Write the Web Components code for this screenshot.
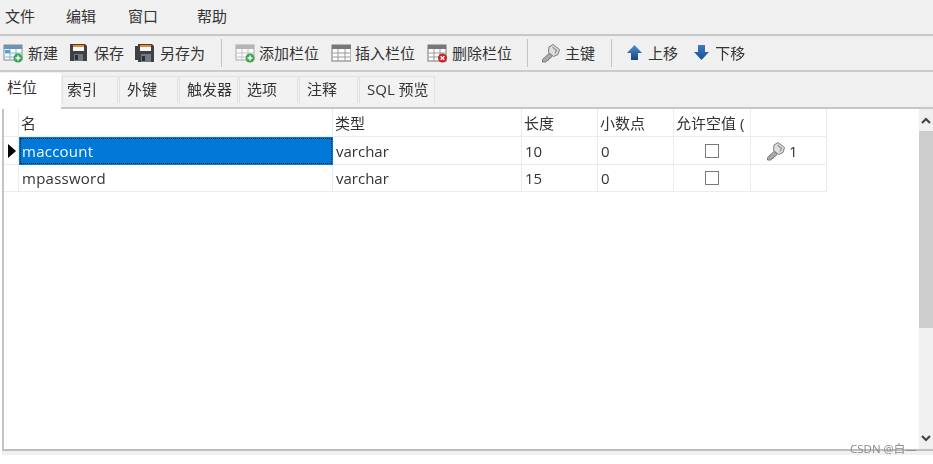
<!DOCTYPE html>
<html>
<head>
<meta charset="utf-8">
<style>
  html, body { margin: 0; padding: 0; background: #fff; }
  body { font-family: "Open Sans", "Noto Sans CJK SC", sans-serif; font-size: 15px; color: #333; }
  #app { display: flex; flex-direction: column; width: 933px; height: 464px; overflow: hidden; position: relative; filter: blur(0.35px); }
</style>
</head>
<body>
<div id="app">
  <menu-bar>
    <menu-item style="margin-left:5px">文件</menu-item>
    <menu-item style="margin-left:31px">编辑</menu-item>
    <menu-item style="margin-left:32px">窗口</menu-item>
    <menu-item style="margin-left:39px">帮助</menu-item>
  </menu-bar>
  <tool-bar>
    <tool-btn icon="new" style="margin-left:3px">新建</tool-btn>
    <tool-btn icon="save" style="margin-left:11px">保存</tool-btn>
    <tool-btn icon="saveas" style="margin-left:11px">另存为</tool-btn>
    <tool-sep style="margin-left:16px"></tool-sep>
    <tool-btn icon="add" gap="4" style="margin-left:13px">添加栏位</tool-btn>
    <tool-btn icon="insert" gap="4" style="margin-left:12px">插入栏位</tool-btn>
    <tool-btn icon="delete" style="margin-left:12px">删除栏位</tool-btn>
    <tool-sep style="margin-left:15px"></tool-sep>
    <tool-btn icon="key" gap="4" style="margin-left:13px">主键</tool-btn>
    <tool-sep style="margin-left:16px"></tool-sep>
    <tool-btn icon="up" gap="6" style="margin-left:15px">上移</tool-btn>
    <tool-btn icon="down" gap="6" style="margin-left:16px">下移</tool-btn>
  </tool-bar>
  <tab-bar>
    <tab-item active style="width:61px">栏位</tab-item>
    <tab-item style="width:56px;padding-left:4px">索引</tab-item>
    <tab-item style="width:59px">外键</tab-item>
    <tab-item style="width:59px">触发器</tab-item>
    <tab-item style="width:59px">选项</tab-item>
    <tab-item style="width:59px">注释</tab-item>
    <tab-item style="width:76px">SQL 预览</tab-item>
  </tab-bar>
  <design-pane>
    <design-grid></design-grid>
    <scroll-bar slot="scroll"></scroll-bar>
  </design-pane>
  <foot-strip></foot-strip>
  <water-mark>CSDN @白—</water-mark>
</div>

<script>
const ICONS = {
  new: `<rect x="1" y="2" width="18" height="15" fill="#fff" stroke="#7c8a96"/><rect x="1" y="2" width="18" height="4" fill="#6f93ad"/><path d="M2 10h16M2 14h16M7 6v11M13 6v11" stroke="#7fb2d6"/><rect x="2" y="7" width="5" height="3" fill="#4ba3dc"/><circle cx="15" cy="15" r="4.5" fill="#3aa655"/><path d="M15 12.5v5M12.5 15h5" stroke="#fff" stroke-width="1.6"/>`,
  save: `<path d="M1 1h15l2 2v15H1z" fill="#3c4148"/><rect x="4" y="2" width="11" height="6" fill="#f7f7f7"/><rect x="4" y="2" width="11" height="2" fill="#ee8a2c"/><rect x="5" y="11" width="9" height="7" fill="#70767e"/><rect x="6" y="12" width="3" height="5" fill="#2c3036"/>`,
  saveas: `<path d="M0 3h3v14H0z" fill="#3c4148"/><path d="M3 1h14l2 2v16H3z" fill="#3c4148"/><rect x="5" y="2" width="11" height="6" fill="#f7f7f7"/><rect x="5" y="2" width="11" height="2" fill="#ee8a2c"/><rect x="6" y="11" width="10" height="8" fill="#747a82"/><rect x="7" y="13" width="3" height="5" fill="#2c3036"/>`,
  add: `<rect x="1" y="2" width="18" height="15" fill="#fbfbfb" stroke="#a8a8a8"/><rect x="1" y="2" width="18" height="4" fill="#b5b5b5"/><path d="M2 10h16M2 14h16M7 6v11M13 6v11" stroke="#c4c4c4"/><circle cx="15" cy="15" r="4.5" fill="#3aa655"/><path d="M15 12.5v5M12.5 15h5" stroke="#fff" stroke-width="1.6"/>`,
  insert: `<rect x="1" y="2" width="19" height="16" fill="#fdfdfd" stroke="#777"/><rect x="1" y="2" width="19" height="4" fill="#777"/><path d="M2 10h17M2 14h17M7 6v12M14 6v12" stroke="#9a9a9a"/>`,
  delete: `<rect x="1" y="2" width="18" height="16" fill="#fdfdfd" stroke="#777"/><rect x="1" y="2" width="18" height="4" fill="#777"/><path d="M2 10h16M2 14h16M7 6v12M13 6v12" stroke="#9a9a9a"/><circle cx="15.5" cy="15" r="4.5" fill="#c9252b"/><path d="M13.7 13.2l3.6 3.6M17.3 13.2l-3.6 3.6" stroke="#fff" stroke-width="1.4"/>`,
  key: `<path d="M8 10.500L1.500 16.500v2.500h3.500l1-1.500 1.500-.3.400-1.600 1.600-.4 2-2.700z" fill="#a9a9a9" stroke="#7b7b7b"/><path d="M12 1.500l6.500 5-1.500 5-4.500 2-5-4 .5-5.500z" fill="#dedede" stroke="#7b7b7b"/><path d="M11.500 4l4 3.500-1.500 3" fill="none" stroke="#9a9a9a" stroke-width="1.500"/>`,
  up: `<path d="M7.500 2L15 10h-4v7H4v-7H0z" fill="url(#blu)"/>`,
  down: `<path d="M7.500 17L15 9h-4V2H4v7H0z" fill="url(#blu2)"/>`
};
const GRADS = `<defs><linearGradient id="blu" x1="0" y1="0" x2="0" y2="1"><stop offset="0" stop-color="#4d8fd6"/><stop offset="1" stop-color="#12457f"/></linearGradient><linearGradient id="blu2" x1="0" y1="0" x2="0" y2="1"><stop offset="0" stop-color="#3d7cc4"/><stop offset="1" stop-color="#16508f"/></linearGradient></defs>`;

function iconSvg(name) {
  const w = (name === 'up' || name === 'down') ? 15 : 20;
  return `<svg width="${w}" height="20" viewBox="0 0 ${w} 20">${GRADS}${ICONS[name]}</svg>`;
}

class MenuBar extends HTMLElement {
  constructor() {
    super();
    this.attachShadow({ mode: 'open' }).innerHTML = `
      <style>
        :host { display: flex; align-items: center; height: 34px; flex: none; background: #f0f0f0; border-bottom: 2px solid #c6c6c6; box-sizing: content-box; }
      </style>
      <slot></slot>`;
  }
}
class MenuItem extends HTMLElement {
  constructor() {
    super();
    this.attachShadow({ mode: 'open' }).innerHTML = `
      <style>:host { display: block; font-size: 15px; line-height: 20px; margin-top: -3px; }</style>
      <slot></slot>`;
  }
}
class ToolBar extends HTMLElement {
  constructor() {
    super();
    this.attachShadow({ mode: 'open' }).innerHTML = `
      <style>
        :host { display: flex; align-items: center; height: 34px; flex: none; background: #f0f0f0; border-bottom: 2px solid #cbcbcb; }
      </style>
      <slot></slot>`;
  }
}
class ToolBtn extends HTMLElement {
  constructor() {
    super();
    const icon = this.getAttribute('icon');
    const gap = this.getAttribute('gap') || 5;
    this.attachShadow({ mode: 'open' }).innerHTML = `
      <style>
        :host { display: flex; align-items: center; gap: ${gap}px; font-size: 15px; line-height: 20px; white-space: nowrap; }
        svg { display: block; flex: none; }
      </style>
      ${iconSvg(icon)}<span><slot></slot></span>`;
  }
}
class ToolSep extends HTMLElement {
  constructor() {
    super();
    this.attachShadow({ mode: 'open' }).innerHTML = `
      <style>:host { display: block; width: 1px; height: 28px; background: #c4c4c4; }</style>`;
  }
}
class TabBar extends HTMLElement {
  constructor() {
    super();
    this.attachShadow({ mode: 'open' }).innerHTML = `
      <style>
        :host { display: flex; align-items: flex-start; gap: 1px; height: 35px; flex: none; background: #f0f0f0; box-sizing: border-box; padding-top: 1px; }
      </style>
      <slot></slot>`;
  }
}
class TabItem extends HTMLElement {
  constructor() {
    super();
    this.attachShadow({ mode: 'open' }).innerHTML = `
      <style>
        :host { display: block; box-sizing: border-box; height: 27px; margin-top: 3px; padding: 2px 0 0 7px; font-size: 15px; line-height: 20px; background: #f2f2f2; border: 1px solid #e2e2e2; border-bottom: none; white-space: nowrap; }
        :host([active]) { height: 36px; margin-top: 0; padding: 4px 0 0 7px; background: #fff; border: none; position: relative; z-index: 1; }
      </style>
      <slot></slot>`;
  }
}
class DesignPane extends HTMLElement {
  constructor() {
    super();
    this.attachShadow({ mode: 'open' }).innerHTML = `
      <style>
        :host { display: flex; box-sizing: border-box; width: 931px; height: 344px; flex: none; margin-left: 2px; background: #fff; border-left: 2px solid #c3c3cb; border-top: 2px solid #c6c6cc; border-bottom: 2px solid #bdbdc3; }
        .main { flex: none; width: 915px; }
        ::slotted(scroll-bar) { flex: none; }
      </style>
      <div class="main"><slot></slot></div><slot name="scroll"></slot>`;
  }
}
class DesignGrid extends HTMLElement {
  constructor() {
    super();
    const cols = ['名', '类型', '长度', '小数点', '允许空值 ('];
    const rows = [
      ['maccount', 'varchar', '10', '0', true],
      ['mpassword', 'varchar', '15', '0', false]
    ];
    const head = `<div class="cell gut"></div>` + cols.map(c => `<div class="cell head">${c}</div>`).join('') + `<div class="cell head"></div>`;
    const body = rows.map((r, i) => `
      <div class="cell gut">${i === 0 ? '<svg width="9" height="14" viewBox="0 0 9 14"><path d="M1 0l8 7-8 7z" fill="#000"/></svg>' : ''}</div>
      <div class="cell name ${i === 0 ? 'sel' : ''}">${r[0]}</div>
      <div class="cell">${r[1]}</div>
      <div class="cell">${r[2]}</div>
      <div class="cell">${r[3]}</div>
      <div class="cell mid"><span class="box"></span></div>
      <div class="cell pk">${r[4] ? `<svg width="20" height="20" viewBox="0 0 20 20">${ICONS.key}</svg><span>1</span>` : ''}</div>`).join('');
    this.attachShadow({ mode: 'open' }).innerHTML = `
      <style>
        :host { display: grid; grid-template-columns: 15px 314px 189px 76px 76px 77px 76px; grid-template-rows: 28px 28px 27px; width: 823px; font-size: 15px; }
        .cell { box-sizing: border-box; display: flex; align-items: center; padding-left: 3px; border-right: 1px solid #ececec; border-bottom: 1px solid #ececec; white-space: nowrap; overflow: hidden; color: #333; }
        .head { padding-left: 2px; }
        .name { letter-spacing: 0.25px; }
        .gut { padding-left: 3px; }
        .sel { background: #0078d7; color: #f4f8fc; outline: 1px dotted #222; outline-offset: -2px; border-color: #0078d7; }
        .mid { justify-content: center; padding-left: 0; }
        .box { display: block; width: 14px; height: 14px; box-sizing: border-box; border: 1px solid #7a7a7a; background: #fff; }
        .pk { padding-left: 15px; gap: 3px; }
      </style>
      ${head}${body}`;
  }
}
class ScrollBar extends HTMLElement {
  constructor() {
    super();
    this.attachShadow({ mode: 'open' }).innerHTML = `
      <style>
        :host { display: flex; flex-direction: column; width: 14px; height: 100%; background: #f0f0f0; }
        .arrow { height: 22px; flex: none; display: flex; align-items: center; justify-content: center; }
        .thumb { height: 197px; flex: none; background: #cdcdcd; }
        .rest { flex: 1; }
      </style>
      <div class="arrow"><svg width="10" height="7" viewBox="0 0 10 7"><path d="M1 6l4-4 4 4" fill="none" stroke="#444" stroke-width="2.200"/></svg></div>
      <div class="thumb"></div>
      <div class="rest"></div>
      <div class="arrow"><svg width="10" height="7" viewBox="0 0 10 7"><path d="M1 1l4 4 4-4" fill="none" stroke="#444" stroke-width="2.200"/></svg></div>`;
  }
}
class FootStrip extends HTMLElement {
  constructor() {
    super();
    this.attachShadow({ mode: 'open' }).innerHTML = `
      <style>:host { display: block; height: 4px; flex: none; margin-left: 2px; background: #f0f0f0; }</style>`;
  }
}
class WaterMark extends HTMLElement {
  constructor() {
    super();
    this.attachShadow({ mode: 'open' }).innerHTML = `
      <style>:host { position: absolute; left: 850px; top: 442px; font-size: 11.5px; line-height: 14px; color: #8a8a8a; white-space: nowrap; }</style>
      <slot></slot>`;
  }
}
customElements.define('menu-bar', MenuBar);
customElements.define('menu-item', MenuItem);
customElements.define('tool-bar', ToolBar);
customElements.define('tool-btn', ToolBtn);
customElements.define('tool-sep', ToolSep);
customElements.define('tab-bar', TabBar);
customElements.define('tab-item', TabItem);
customElements.define('design-pane', DesignPane);
customElements.define('design-grid', DesignGrid);
customElements.define('scroll-bar', ScrollBar);
customElements.define('foot-strip', FootStrip);
customElements.define('water-mark', WaterMark);
</script>
</body>
</html>
